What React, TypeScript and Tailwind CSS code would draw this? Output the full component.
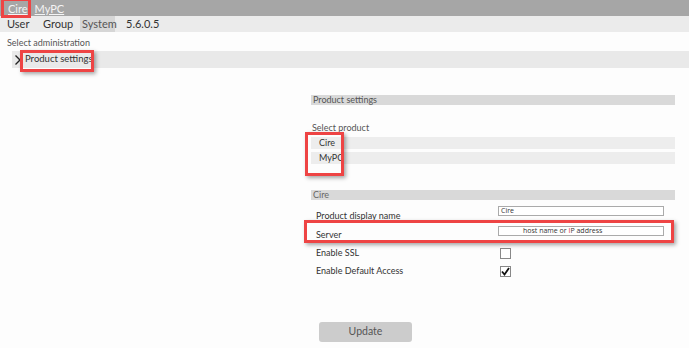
import React from "react";

export default function App() {
  return (
    <div
      className="relative w-[689px] h-[348px] overflow-hidden bg-[#fdfdfd] text-[#444]"
      style={{ fontFamily: 'Lato, "Open Sans", sans-serif' }}
    >
      {/* Top bar */}
      <div className="h-[16px] bg-[#a6a6a6] flex items-center pl-[8px] gap-[7px] text-[11px] leading-none text-[#f4f4f4]">
        <span className="underline">Cire</span>
        <span className="underline">MyPC</span>
      </div>
      {/* Tabs */}
      <div className="h-[16px] bg-[#ebebeb] flex items-stretch text-[11px] leading-[16px] text-[#333]">
        <span className="pl-[7px] w-[43px]">User</span>
        <span className="w-[37px]">Group</span>
        <span className="bg-[#d6d6d6] pl-[2px] w-[35px] text-[#555]">System</span>
        <span className="pl-[11px]">5.6.0.5</span>
      </div>
      {/* Select administration */}
      <div className="h-[19px] pl-[7px] pt-[5px] text-[9px] leading-[12px] text-[#555]">
        Select administration
      </div>
      <div className="ml-[12px] h-[17px] bg-[#e9e9e9] flex items-center text-[9.5px] text-[#333]">
        <svg width="8" height="12" viewBox="0 0 8 12" className="ml-[2px] mr-[3px]">
          <path d="M1.5 1.5 L6 6 L1.5 10.5" fill="none" stroke="#222" strokeWidth="1.4" />
        </svg>
        <span>Product settings</span>
      </div>

      {/* Right panel */}
      <div className="ml-[311px] w-[364px] mt-[27px] text-[9px] text-[#444]">
        <div className="h-[10px] bg-[#d9d9d9] leading-[10px] pl-[2px] text-[#555]">Product settings</div>
        <div className="mt-[17px] h-[11px] leading-[11px] pl-[1px] text-[#555]">Select product</div>
        <div className="mt-[4px] h-[12px] bg-[#ededed] leading-[12px] pl-[8px] text-[#333]">Cire</div>
        <div className="mt-[3px] h-[12px] bg-[#ededed] leading-[12px] pl-[8px] text-[#333]">MyPC</div>

        <div className="mt-[26px] h-[10px] bg-[#d9d9d9] leading-[10px] pl-[2px] text-[#666]">Cire</div>

        <div className="mt-[6px] flex items-start h-[13px]">
          <div className="w-[187px] pl-[5px] pt-[3px] leading-[13px] text-[#333]">Product display name</div>
          <div
            className="w-[166px] h-[10px] bg-white border border-[#aaa] text-[7px] leading-[8px] pl-[2px] text-[#333]"
            style={{ fontFamily: '"Open Sans", sans-serif' }}
          >
            Cire
          </div>
        </div>
        <div className="mt-[7px] flex items-start h-[18px]">
          <div className="w-[187px] pl-[5px] pt-[2px] leading-[13px] text-[#333]">Server</div>
          <div
            className="w-[166px] h-[10px] bg-white border border-[#aaa] text-[7px] leading-[8px] pl-[24px] text-[#333]"
            style={{ fontFamily: '"Open Sans", sans-serif' }}
          >
            host name or <span className="text-[#d33]">I</span>P address
          </div>
        </div>
        <div className="flex items-center h-[18px]">
          <div className="w-[189px] pl-[5px] text-[#333]">Enable SSL</div>
          <div className="w-[11px] h-[11px] bg-white border border-[#888]" />
        </div>
        <div className="flex items-center h-[18px]">
          <div className="w-[189px] pl-[5px] text-[#333]">Enable Default Access</div>
          <div className="w-[11px] h-[11px] bg-white border border-[#888] flex items-center justify-center">
            <svg width="9" height="9" viewBox="0 0 9 9">
              <path d="M1 4.5 L3.5 7.5 L8 1" fill="none" stroke="#111" strokeWidth="1.8" />
            </svg>
          </div>
        </div>

        <div className="mt-[42px] ml-[8px] w-[93px] h-[20px] bg-[#cccccc] rounded-[3px] flex items-center justify-center text-[10.5px] text-[#555]">
          Update
        </div>
      </div>

      {/* Red annotation boxes */}
      <div className="absolute left-[1px] top-[-2px] w-[30px] h-[20px] border-[3px] border-[#ee4444]" />
      <div className="absolute left-[20px] top-[50px] w-[74px] h-[22px] border-[3px] border-[#ee4444] shadow-[2px_2px_4px_rgba(0,0,0,0.35)]" />
      <div className="absolute left-[305px] top-[132px] w-[39px] h-[44px] border-[3px] border-[#ee4444] shadow-[2px_2px_4px_rgba(0,0,0,0.35)]" />
      <div className="absolute left-[304px] top-[220px] w-[370px] h-[23px] border-[3px] border-[#ee4444] shadow-[2px_2px_4px_rgba(0,0,0,0.35)]" />
    </div>
  );
}
